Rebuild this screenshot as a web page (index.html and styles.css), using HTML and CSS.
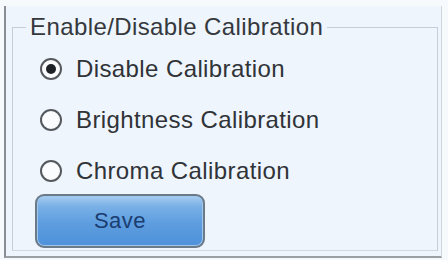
FILE: index.html
```html
<!DOCTYPE html>
<html>
<head>
<meta charset="utf-8">
<link rel="stylesheet" href="styles.css">
</head>
<body>
<div class="panel">
  <fieldset class="group">
    <legend class="legend">Enable/Disable Calibration</legend>
    <div class="options">
      <label class="option"><span class="radio checked"></span>Disable Calibration</label>
      <label class="option"><span class="radio"></span>Brightness Calibration</label>
      <label class="option"><span class="radio"></span>Chroma Calibration</label>
    </div>
    <button class="save">Save</button>
  </fieldset>
</div>
</body>
</html>
```
FILE: styles.css
```css
html, body {
  margin: 0;
  padding: 0;
  background: #f7fafd;
  width: 448px;
  height: 260px;
  overflow: hidden;
  font-family: "Liberation Sans", Arial, sans-serif;
}
.panel {
  box-sizing: border-box;
  margin: 6px 0 0 4px;
  width: 438px;
  height: 252px;
  background: #eef5fc;
  border-left: 2px solid #8a8f96;
  border-bottom: 2px solid #9aa0a6;
  border-right: 1px solid #cfd6dd;
  padding: 9px 3px 0 6px;
}
.group {
  box-sizing: border-box;
  margin: 0;
  height: 236px;
  border: 1px solid #c5ced8;
  border-bottom-color: #d0d8e0;
  padding: 0 0 0 27px;
  display: flex;
  flex-direction: column;
}
.legend {
  font-size: 24px;
  letter-spacing: 0.4px;
  color: #35383d;
  padding: 0 4px 0 4px;
  margin-left: -14px;
  line-height: 24px;
}
.options {
  display: flex;
  flex-direction: column;
  gap: 27px;
  margin-top: 18px;
}
.option {
  display: flex;
  align-items: center;
  gap: 14px;
  font-size: 24px;
  letter-spacing: 0.4px;
  line-height: 24px;
  color: #303338;
}
.radio {
  box-sizing: border-box;
  flex: none;
  width: 22px;
  height: 22px;
  border-radius: 50%;
  border: 2px solid #55595e;
  background: #fbfcfd;
  display: flex;
  align-items: center;
  justify-content: center;
}
.radio.checked::after {
  content: "";
  width: 10px;
  height: 10px;
  border-radius: 50%;
  background: #1e2125;
}
.save {
  box-sizing: border-box;
  margin: 11px 0 0 -5px;
  width: 170px;
  height: 54px;
  border: 2px solid #6c7a88;
  border-radius: 9px;
  background: linear-gradient(#a9cdf0 0%, #7ab1e6 20%, #5d9ddf 55%, #4f92da 100%);
  box-shadow: inset 0 0 0 1px #9fc6ee;
  font-family: "Liberation Sans", Arial, sans-serif;
  font-size: 22px;
  letter-spacing: 0.5px;
  color: #1b3d70;
  padding: 0;
}
```
